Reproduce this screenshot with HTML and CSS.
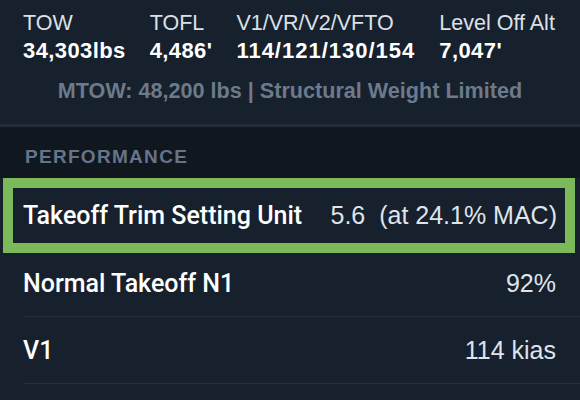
FILE: index.html
```html
<!DOCTYPE html>
<html lang="en">
<head>
    <meta charset="UTF-8">
    <meta name="viewport" content="width=device-width, initial-scale=1.0">
    <title>Takeoff Performance</title>
    <link rel="stylesheet" href="styles.css">
</head>
<body>
    <div id="summary">
        <div class="stats">
            <div class="stat">
                <div class="stat-label">TOW</div>
                <div class="stat-value">34,303lbs</div>
            </div>
            <div class="stat">
                <div class="stat-label">TOFL</div>
                <div class="stat-value">4,486'</div>
            </div>
            <div class="stat">
                <div class="stat-label">V1/VR/V2/VFTO</div>
                <div class="stat-value speeds">114/121/130/154</div>
            </div>
            <div class="stat">
                <div class="stat-label">Level Off Alt</div>
                <div class="stat-value">7,047'</div>
            </div>
        </div>
        <div class="mtow">MTOW: 48,200 lbs | Structural Weight Limited</div>
    </div>

    <div class="section-header">PERFORMANCE</div>

    <ul id="performance">
        <li class="row highlight">
            <span class="row-label">Takeoff Trim Setting Unit</span>
            <span class="row-value">5.6&nbsp;&nbsp;(at 24.1% MAC)</span>
        </li>
        <li class="row">
            <span class="row-label">Normal Takeoff N1</span>
            <span class="row-value">92%</span>
        </li>
        <li class="row">
            <span class="row-label">V1</span>
            <span class="row-value">114 kias</span>
        </li>
    </ul>
</body>
</html>
```

FILE: styles.css
```css
body {
    margin: 0;
    height: 400px;
    overflow: hidden;
    font-family: "Liberation Sans", Arial, sans-serif;
    background-color: #17202d;
    color: #fff;
}

#summary {
    height: 127px;
    box-sizing: border-box;
    padding: 9px 23px 0;
    border-bottom: 3px solid #222c3a;
}

.stats {
    display: flex;
    gap: 24px;
    white-space: nowrap;
}

.stat {
    flex-shrink: 0;
}

.stat-label {
    font-size: 21.5px;
    line-height: 28px;
    color: #dce1e7;
}

.stat-value {
    font-size: 22px;
    line-height: 28px;
    font-weight: bold;
    letter-spacing: 0.4px;
}

/* slashes in the speed string run wider in the original */
.stat-value.speeds {
    letter-spacing: 1px;
}

.mtow {
    margin-top: 12px;
    text-align: center;
    font-size: 21.6px;
    line-height: 28px;
    font-weight: bold;
    color: #6c7a8b;
}

.section-header {
    height: 51px;
    box-sizing: border-box;
    padding: 18px 25px 0;
    background-color: #11171f;
    font-size: 19px;
    line-height: 24px;
    font-weight: bold;
    letter-spacing: 1.3px;
    color: #66748a;
}

#performance {
    list-style: none;
    margin: 0;
    padding: 0;
}

.row {
    display: flex;
    justify-content: space-between;
    align-items: center;
    height: 67px;
    box-sizing: border-box;
    margin-left: 23px;
    padding-right: 24px;
    border-bottom: 1px solid #243040;
}

.row.highlight {
    height: 75px;
    margin: 0 5px -3px 3px;
    padding: 0 8px 0 10px;
    border: 10px solid #7cb95a;
}

.row-label {
    font-family: Roboto, "Liberation Sans", sans-serif;
    font-size: 25px;
    font-weight: 500;
}

.row-value {
    font-size: 25px;
    color: #dfe4ea;
}
```
